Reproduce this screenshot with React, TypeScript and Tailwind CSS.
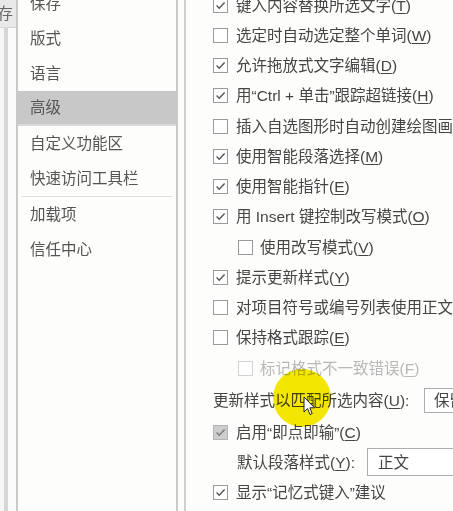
import React from 'react';
import clsx from 'clsx';

const font = { fontFamily: '"Liberation Sans", "Noto Sans CJK SC", sans-serif' };

const K = ({ c }: { c: string }) => <span className="underline underline-offset-2">{c}</span>;

type Row = {
  label: React.ReactNode;
  checked?: boolean;
  indent?: boolean;
  disabled?: boolean;
  filled?: boolean;
};

const rows: Row[] = [
  { label: <>键入内容替换所选文字(<K c="T" />)</>, checked: true },
  { label: <>选定时自动选定整个单词(<K c="W" />)</> },
  { label: <>允许拖放式文字编辑(<K c="D" />)</>, checked: true },
  { label: <>用“Ctrl + 单击”跟踪超链接(<K c="H" />)</>, checked: true },
  { label: <>插入自选图形时自动创建绘图画布(<K c="N" />)</> },
  { label: <>使用智能段落选择(<K c="M" />)</>, checked: true },
  { label: <>使用智能指针(<K c="E" />)</>, checked: true },
  { label: <>用 Insert 键控制改写模式(<K c="O" />)</>, checked: true },
  { label: <>使用改写模式(<K c="V" />)</>, indent: true },
  { label: <>提示更新样式(<K c="Y" />)</>, checked: true },
  { label: <>对项目符号或编号列表使用正文样式(<K c="N" />)</> },
  { label: <>保持格式跟踪(<K c="E" />)</> },
  { label: <>标记格式不一致错误(<K c="F" />)</>, indent: true, disabled: true },
];

const navItems = ['保存', '版式', '语言', '高级', '自定义功能区', '快速访问工具栏'];
const navItems2 = ['加载项', '信任中心'];

function Box({ checked, disabled, filled }: { checked?: boolean; disabled?: boolean; filled?: boolean }) {
  return (
    <span
      className={clsx(
        'flex h-[15px] w-[15px] shrink-0 items-center justify-center border',
        disabled ? 'border-[#d2d2d2] bg-white' : filled ? 'border-[#b4b4b4] bg-[#cdcdcd]' : 'border-[#9a9a9a] bg-white'
      )}
    >
      {checked && (
        <svg viewBox="0 0 13 13" className="h-[13px] w-[13px]">
          <path
            d="M2.6 6.6 L5.2 9.2 L10.6 3.4"
            fill="none"
            stroke={filled ? '#7a7a7a' : '#555555'}
            strokeWidth="1.4"
          />
        </svg>
      )}
    </span>
  );
}

const App = () => {
  return (
    <div
      className="relative flex h-[511px] w-[453px] overflow-hidden bg-[#fdfdfb] text-[15.5px] text-[#454545]"
      style={font}
    >
      {/* strip of the outer window on the left */}
      <div className="flex w-[16px] shrink-0 flex-col bg-[#f1f1f1]">
        <div className="flex h-[28px] items-center justify-end overflow-hidden border-b border-[#d6d6d6] bg-[#e9e9e9] pr-[3px] text-[#666]">
          <span className="whitespace-nowrap">保存</span>
        </div>
        <div className="flex flex-1">
          <div className="w-[4px] bg-[#f6f6f6]" />
          <div className="w-[4px] bg-[#d6d6d6]" />
          <div className="flex-1 bg-[#fbfbfb]" />
        </div>
      </div>

      {/* nav */}
      <div className="flex w-[162px] shrink-0 flex-col border-x-2 border-[#c9c9c9] bg-[#fdfdfb] pt-px">
        <div className="-mt-[15px] flex flex-col">
          {navItems.map((n) => (
            <div
              key={n}
              className={clsx(
                'flex h-[35px] items-center pl-[12px] whitespace-nowrap text-[#555]',
                n === '高级' && 'border-b-2 border-[#d9d9d9] bg-[#c8c8c8] text-[#3c3c3c]'
              )}
            >
              {n}
            </div>
          ))}
          <div className="mx-[4px] h-px bg-[#dedede]" />
          {navItems2.map((n) => (
            <div key={n} className="flex h-[35px] items-center pl-[12px] whitespace-nowrap text-[#555]">
              {n}
            </div>
          ))}
        </div>
      </div>

      <div className="w-[6px] shrink-0" />
      <div className="w-[2px] shrink-0 bg-[#cfcfcf]" />

      {/* options */}
      <div className="flex min-w-0 flex-1 flex-col pl-[27px]">
        <div className="-mt-[10px] flex flex-col">
          {rows.map((r, i) => (
            <div
              key={i}
              className={clsx(
                'flex h-[30.25px] items-center gap-2 whitespace-nowrap',
                r.indent && 'ml-[25px] gap-[7px]',
                r.disabled && 'text-[#b8b8b8]'
              )}
            >
              <Box checked={r.checked} disabled={r.disabled} />
              <span>{r.label}</span>
            </div>
          ))}
          <div className="flex h-[34px] items-center whitespace-nowrap">
            <span className="w-[211px] shrink-0">
              更新样式以匹配所选内容(<K c="U" />):
            </span>
            <div className="flex h-[25px] w-[120px] shrink-0 items-center border border-[#adadad] bg-white pl-[9px]">
              保留上一个格式
            </div>
          </div>
          <div className="flex h-[30px] items-center gap-2 whitespace-nowrap">
            <Box checked filled />
            <span>启用“即点即输”(<K c="C" />)</span>
          </div>
          <div className="flex h-[30px] items-center whitespace-nowrap pl-[24px]">
            <span className="w-[130px] shrink-0">
              默认段落样式(<K c="Y" />):
            </span>
            <div className="flex h-[28px] w-[160px] shrink-0 items-center border border-[#adadad] bg-white pl-[10px]">
              正文
            </div>
          </div>
          <div className="flex h-[30px] items-center gap-2 whitespace-nowrap">
            <Box checked />
            <span>显示“记忆式键入”建议</span>
          </div>
        </div>
      </div>

      {/* cursor highlight */}
      <div className="pointer-events-none absolute left-[273px] top-[369px] h-[58px] w-[58px] rounded-full bg-[#f5e800] mix-blend-multiply" />
      <svg className="pointer-events-none absolute left-[303px] top-[396px]" width="13" height="21" viewBox="0 0 13 21">
        <path d="M1 1 L1 16 L4.5 12.5 L7 18.5 L9.2 17.6 L6.8 11.8 L11.6 11.8 Z" fill="#fff" stroke="#222" strokeWidth="1" strokeLinejoin="round" />
      </svg>
    </div>
  );
};

export default App;
